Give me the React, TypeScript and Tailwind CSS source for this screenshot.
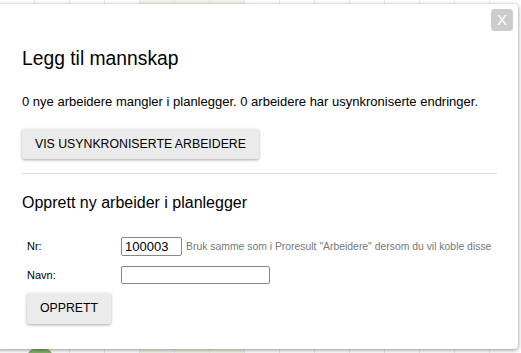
// Dialog: legg til mannskap i planlegger

const cols = Array.from({ length: 15 })

function Bakgrunn() {
  return (
    <div className="absolute inset-0 flex bg-white">
      {cols.map((_, i) => (
        <div
          key={i}
          className={
            'w-[35px] shrink-0 border-r border-gray-200 ' +
            (i >= 4 && i <= 6 ? 'bg-[#eef7e8]' : '')
          }
        />
      ))}
      <div className="absolute left-[28px] bottom-[-8px] w-[24px] h-[12px] rounded-full bg-[#7fb069]" />
    </div>
  )
}

export default function App() {
  return (
    <div className="relative w-[521px] h-[353px] overflow-hidden font-['Liberation_Sans',Arial,sans-serif] text-[#222]">
      <Bakgrunn />
      <div className="absolute left-[-4px] top-[4px] w-[522px] h-[345px] bg-white rounded-[4px] shadow-[0_1px_4px_rgba(0,0,0,0.45)] pl-[26px] pr-[21px]">
        <button className="absolute right-[5px] top-[5px] w-[22px] h-[22px] rounded-[4px] bg-[#cccccc] text-white text-[15px] flex items-center justify-center">
          X
        </button>
        <h1 className="pt-[42px] text-[19.3px] leading-[26px] text-black">Legg til mannskap</h1>
        <p className="mt-[22px] text-[13px] leading-[16px] text-black">
          0 nye arbeidere mangler i planlegger. 0 arbeidere har usynkroniserte endringer.
        </p>
        <button className="mt-[19px] h-[30px] px-[13px] bg-[#ebebeb] rounded-[2px] shadow-[0_1px_3px_rgba(0,0,0,0.35)] text-[12.3px] text-black">
          VIS USYNKRONISERTE ARBEIDERE
        </button>
        <div className="mt-[14px] border-t border-[#dddddd]" />
        <h2 className="mt-[20px] text-[16px] leading-[18px] text-black">Opprett ny arbeider i planlegger</h2>
        <div className="mt-[25px] pl-[5px] flex flex-col gap-[10px] text-[11px]">
          <div className="flex items-center">
            <label className="w-[94px] shrink-0 text-black">Nr:</label>
            <input
              defaultValue="100003"
              className="w-[61px] h-[19px] shrink-0 border border-[#888] rounded-[2px] px-[3px] text-[13px] text-black outline-none"
            />
            <span className="ml-[4px] whitespace-nowrap text-[10.4px] text-[#777]">
              Bruk samme som i Proresult "Arbeidere" dersom du vil koble disse
            </span>
          </div>
          <div className="flex items-center">
            <label className="w-[94px] shrink-0 text-black">Navn:</label>
            <input className="w-[149px] h-[18px] shrink-0 border border-[#888] rounded-[2px] outline-none" />
          </div>
        </div>
        <button className="mt-[9px] ml-[5px] h-[31px] px-[13px] bg-[#ebebeb] rounded-[2px] shadow-[0_1px_3px_rgba(0,0,0,0.35)] text-[12.3px] text-black">
          OPPRETT
        </button>
      </div>
    </div>
  )
}
